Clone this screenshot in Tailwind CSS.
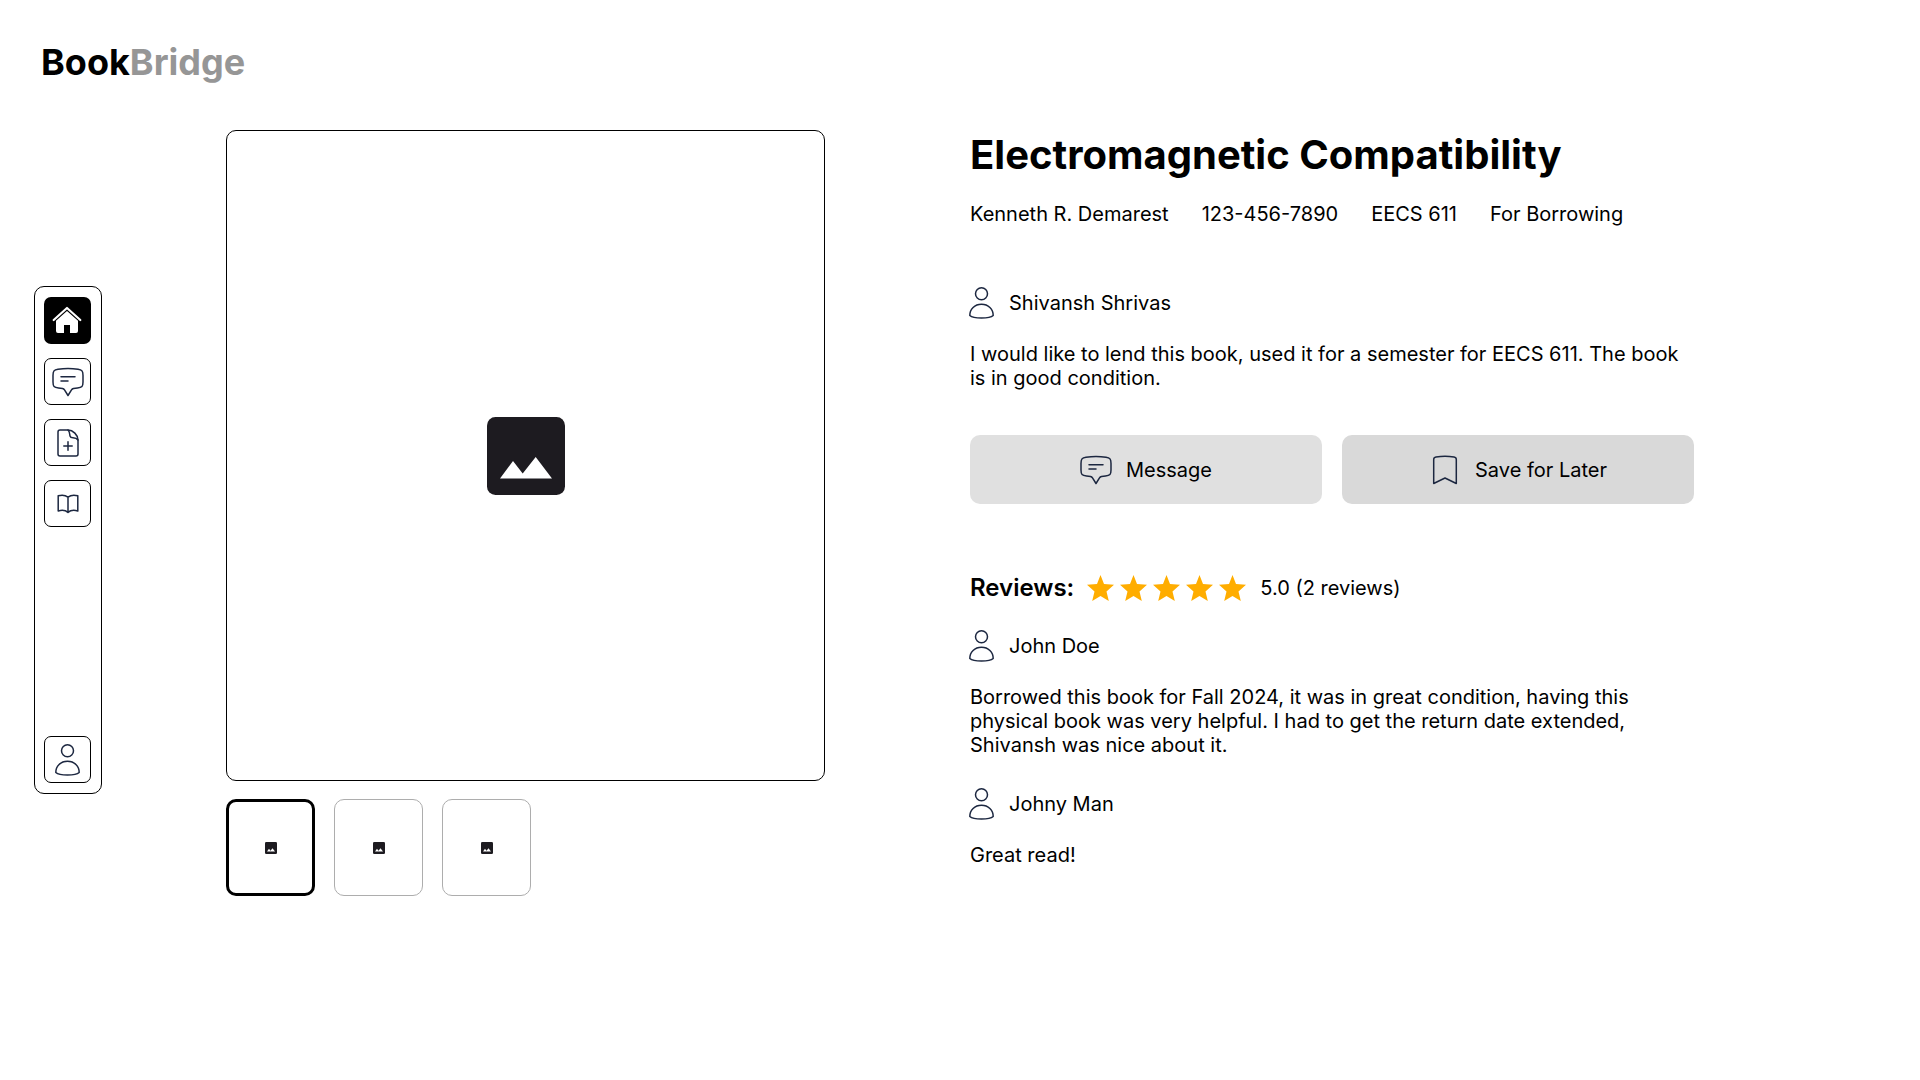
<!DOCTYPE html>
<html lang="en">
<head>
<meta charset="utf-8">
<meta name="viewport" content="width=device-width, initial-scale=1">
<title>Electromagnetic Compatibility – BookBridge</title>
<script src="https://cdn.jsdelivr.net/npm/@tailwindcss/browser@4"></script>
</head>
<body class="min-h-screen bg-white font-['Inter',sans-serif] text-xl leading-6 text-black">

<svg class="hidden" aria-hidden="true">
  <symbol id="chat" viewBox="0 0 32 30"><g fill="none" stroke="#1c2740" stroke-width="1.5" stroke-linecap="round" stroke-linejoin="round"><path d="M1 8.5C1 4 2 2.8 6 2.2c6-.9 14-.9 20 0 4 .6 5 1.800 5 6.300V15c0 4.500-1 5.500-5.500 6l-4 .4c-.9.2-1.500.6-2 1.400L16 28.500l-3.500-5.700c-.5-.8-1.100-1.200-2-1.400l-4-.4C2 20.500 1 19.500 1 15z"/><path d="M9 9.800h14M9 14h7"/></g></symbol>
  <symbol id="person" viewBox="0 0 26 32"><g fill="none" stroke="#1c2740" stroke-width="1.500" stroke-linejoin="round"><circle cx="12.500" cy="6.800" r="6"/><path d="M.8 28.500C.8 22 5.700 17.300 12.500 17.300S24.200 22 24.200 28.500C20.500 31.800 4.500 31.800.8 28.500z"/></g></symbol>
  <symbol id="picture" viewBox="0 0 78 78"><rect width="78" height="78" rx="8.500" fill="#1d1b20"/><path d="M13 61.500 26 44l9.700 12.500L48.700 40 65 61.500z" fill="#fff"/></symbol>
  <symbol id="star" viewBox="0 0 27 26"><path d="M13.500 0 17 8.900l10 .8-7.500 6.700L21.800 26l-8.300-5-8.300 5 2.300-9.600L0 9.700l10-.8z" fill="#ffad00"/></symbol>
</svg>

<header class="px-[41px] pt-10">
  <a href="#" class="text-4xl leading-[44px] font-bold">Book<span class="text-[#969696]">Bridge</span></a>
</header>

<div class="flex items-start pt-[46px] pr-[226px] pl-[34px]">
  <nav aria-label="Main" class="mt-[156px] mr-[124px] flex min-h-[508px] w-[68px] shrink-0 flex-col items-start gap-3.5 rounded-[10px] border border-black py-2.5 pl-[9px]">
    <a href="#" aria-label="Home" class="flex size-[47px] items-center justify-center rounded-[7px] bg-black">
      <svg class="size-[47px]" viewBox="0 0 47 47"><path d="M9.700 23 23 11l13.300 12" fill="none" stroke="#fff" stroke-width="2.200" stroke-linecap="round" stroke-linejoin="round"/><path d="M12 23.800 23 14l11 9.800V34a2 2 0 0 1-2 2h-6v-8h-6v8h-6a2 2 0 0 1-2-2z" fill="#fff"/></svg>
    </a>
    <a href="#" aria-label="Messages" class="flex size-[47px] items-center justify-center rounded-[7px] border border-black"><svg class="h-[30px] w-8"><use href="#chat"/></svg></a>
    <a href="#" aria-label="Add listing" class="flex size-[47px] items-center justify-center rounded-[7px] border border-black">
      <svg class="h-7 w-[22px]" viewBox="0 0 22 28" fill="none" stroke="#1c2740" stroke-width="1.500" stroke-linecap="round" stroke-linejoin="round"><path d="M3 1h8c5 0 10 5 10 10v14a2 2 0 0 1-2 2H3a2 2 0 0 1-2-2V3a2 2 0 0 1 2-2z"/><path d="M11 1c2 2 1.500 4 2 6 .4 1.600 1.500 1.800 3 1.800 2.500 0 4 .7 5 2.200M11 12.800v8.400M6.800 17h8.400"/></svg>
    </a>
    <a href="#" aria-label="Library" class="flex size-[47px] items-center justify-center rounded-[7px] border border-black">
      <svg class="h-5 w-[22px]" viewBox="0 0 22 20" fill="none" stroke="#1c2740" stroke-width="1.500" stroke-linejoin="round"><path d="M11 3.200C8.500 1.200 4.500.8 1.200 1.800V17c3.300-1 7.300-.8 9.800 1.400 2.500-2.200 6.500-2.400 9.800-1.400V1.800C17.500.8 13.500 1.200 11 3.200zv15.200"/></svg>
    </a>
    <a href="#" aria-label="Profile" class="mt-auto flex size-[47px] items-center justify-center rounded-[7px] border border-black"><svg class="h-8 w-[26px]"><use href="#person"/></svg></a>
  </nav>

  <main class="grid min-w-0 flex-1 grid-cols-[599fr_724fr] items-start gap-x-[145px]">
    <section aria-label="Pictures">
      <div class="flex aspect-[599/651] items-center justify-center rounded-[10px] border border-black">
        <svg class="size-[78px]"><use href="#picture"/></svg>
      </div>
      <div class="mt-[18px] flex gap-[19px]">
        <button type="button" aria-label="Picture 1" aria-current="true" class="flex h-[97px] w-[89px] items-center justify-center rounded-[10px] border-3 border-black"><svg class="size-3"><use href="#picture"/></svg></button>
        <button type="button" aria-label="Picture 2" class="flex h-[97px] w-[89px] items-center justify-center rounded-[10px] border border-[#adadad]"><svg class="size-3"><use href="#picture"/></svg></button>
        <button type="button" aria-label="Picture 3" class="flex h-[97px] w-[89px] items-center justify-center rounded-[10px] border border-[#adadad]"><svg class="size-3"><use href="#picture"/></svg></button>
      </div>
    </section>

    <section aria-label="Book details">
      <h1 class="pt-px text-[40px] leading-[48px] font-bold">Electromagnetic Compatibility</h1>
      <div class="mt-[23px] flex flex-wrap gap-x-[33px]">
        <span>Kenneth R. Demarest</span>
        <span>123-456-7890</span>
        <span>EECS 611</span>
        <span>For Borrowing</span>
      </div>

      <div class="mt-[61px] -ml-px flex items-center gap-3.5"><svg class="h-8 w-[26px]"><use href="#person"/></svg><span>Shivansh Shrivas</span></div>
      <p class="mt-[23px]">I would like to lend this book, used it for a semester for EECS 611. The book is in good condition.</p>

      <div class="mt-[45px] grid grid-cols-2 gap-5">
        <button type="button" class="flex h-[69px] items-center justify-center gap-3.5 rounded-[10px] bg-[#e0e0e0]"><svg class="h-[30px] w-8"><use href="#chat"/></svg>Message</button>
        <button type="button" class="flex h-[69px] items-center justify-center gap-3.5 rounded-[10px] bg-[#d9d9d9]">
          <svg class="h-[30px] w-8" viewBox="0 0 32 30"><path d="M4.700 28.500V4.500c0-1.500.8-2.200 2.300-2.500 5-.8 13-.8 18 0 1.500.3 2.300 1 2.300 2.500v24L16 23z" fill="none" stroke="#1c2740" stroke-width="1.500" stroke-linejoin="round"/></svg>Save for Later</button>
      </div>

      <div class="mt-[69px] flex items-center">
        <h2 class="text-2xl leading-[29px] font-semibold">Reviews:</h2>
        <div role="img" aria-label="5 out of 5 stars" class="ml-[13px] flex gap-1.5">
          <svg class="h-[26px] w-[27px]"><use href="#star"/></svg>
          <svg class="h-[26px] w-[27px]"><use href="#star"/></svg>
          <svg class="h-[26px] w-[27px]"><use href="#star"/></svg>
          <svg class="h-[26px] w-[27px]"><use href="#star"/></svg>
          <svg class="h-[26px] w-[27px]"><use href="#star"/></svg>
        </div>
        <span class="ml-3.5">5.0 (2 reviews)</span>
      </div>

      <article class="mt-7">
        <div class="-ml-px flex items-center gap-3.5"><svg class="h-8 w-[26px]"><use href="#person"/></svg><span>John Doe</span></div>
        <p class="mt-[23px]">Borrowed this book for Fall 2024, it was in great condition, having this physical book was very helpful. I had to get the return date extended, Shivansh was nice about it.</p>
      </article>
      <article class="mt-[31px]">
        <div class="-ml-px flex items-center gap-3.5"><svg class="h-8 w-[26px]"><use href="#person"/></svg><span>Johny Man</span></div>
        <p class="mt-[23px]">Great read!</p>
      </article>
    </section>
  </main>
</div>
</body>
</html>
